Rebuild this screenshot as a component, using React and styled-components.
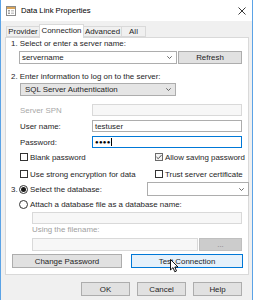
import React from "react";
import styled, { createGlobalStyle } from "styled-components";

const Global = createGlobalStyle`
  html, body { margin: 0; padding: 0; background: #f0f0f0; }
  body { font-family: "Liberation Sans", Arial, sans-serif; font-size: 7.9px; color: #1e1e1e; }
  * { box-sizing: border-box; }
`;

const Window = styled.div`
  width: 253px;
  height: 300px;
  border-left: 1px solid #5ba3e6;
  border-right: 1px solid #5ba3e6;
  background: #f0f0f0;
  overflow: hidden;
  display: flex;
  flex-direction: column;
`;

const TitleBar = styled.div`
  height: 21px;
  background: #fff;
  display: flex;
  align-items: center;
  padding-left: 5px;
  padding-right: 6px;
  flex-shrink: 0;
`;

const TitleText = styled.span`
  font-size: 7.7px;
  margin-left: 5px;
  flex: 1;
  color: #000;
`;

const TabStrip = styled.div`
  display: flex;
  align-items: flex-end;
  height: 13px;
  margin-top: 3px;
  margin-left: 5px;
  position: relative;
  z-index: 1;
`;

const Tab = styled.div`
  width: ${(p) => p.$w}px;
  height: ${(p) => (p.$active ? 14 : 11)}px;
  margin-bottom: ${(p) => (p.$active ? -1 : 0)}px;
  margin-left: ${(p) => (p.$first ? 0 : -1)}px;
  border: 1px solid #d9d9d9;
  border-bottom: ${(p) => (p.$active ? "none" : "1px solid #d9d9d9")};
  background: ${(p) => (p.$active ? "#fff" : "#f0f0f0")};
  display: flex;
  align-items: center;
  justify-content: center;
  padding-bottom: ${(p) => (p.$active ? 2 : 0)}px;
  position: relative;
  z-index: ${(p) => (p.$active ? 2 : 1)};
`;

const Panel = styled.div`
  margin-left: 4px;
  width: 244px;
  border: 1px solid #d9d9d9;
  background: #fff;
  display: flex;
  flex-direction: column;
  padding-bottom: 6px;
`;

const Label = styled.div`
  height: 10px;
  line-height: 10px;
  margin-top: ${(p) => p.$mt || 0}px;
  margin-left: ${(p) => p.$ml || 0}px;
  color: ${(p) => (p.$disabled ? "#a0a0a0" : "#1e1e1e")};
  white-space: nowrap;
`;

const Row = styled.div`
  display: flex;
  align-items: center;
  height: ${(p) => p.$h}px;
  margin-top: ${(p) => p.$mt || 0}px;
  margin-left: ${(p) => p.$ml || 0}px;
`;

const Combo = styled.div`
  width: ${(p) => p.$w}px;
  height: ${(p) => p.$h || 13}px;
  margin-left: ${(p) => p.$ml || 0}px;
  border: 1px solid #adadad;
  background: ${(p) => (p.$gray ? "#e5e5e5" : "#fff")};
  display: flex;
  align-items: center;
  padding-left: ${(p) => (p.$gray ? 4 : 2)}px;
  padding-right: 4px;
  flex-shrink: 0;
`;

const ComboText = styled.span`
  flex: 1;
  white-space: nowrap;
`;

const Input = styled.div`
  width: ${(p) => p.$w}px;
  height: ${(p) => p.$h || 12}px;
  margin-left: ${(p) => p.$ml || 0}px;
  border: 1px solid ${(p) => (p.$focus ? "#0078d7" : p.$disabled ? "#d9d9d9" : "#adadad")};
  background: ${(p) => (p.$disabled ? "#f7f7f7" : "#fff")};
  display: flex;
  align-items: center;
  padding-left: 2px;
  flex-shrink: 0;
  white-space: nowrap;
`;

const Dots = styled.span`
  font-size: 6px;
  letter-spacing: 0.3px;
  color: #000;
`;

const FieldLabel = styled.div`
  width: 72px;
  flex-shrink: 0;
  color: ${(p) => (p.$disabled ? "#a8a8a8" : "#1e1e1e")};
`;

const Caret = styled.span`
  display: inline-block;
  width: 1px;
  height: 8px;
  background: #000;
  margin-left: 0.5px;
`;

const Button = styled.div`
  width: ${(p) => p.$w}px;
  height: ${(p) => p.$h || 14}px;
  margin-left: ${(p) => p.$ml || 0}px;
  border: 1px solid ${(p) => (p.$hover ? "#0078d7" : p.$disabled ? "#bfbfbf" : "#adadad")};
  background: ${(p) => (p.$hover ? "#e5f1fb" : p.$disabled ? "#cccccc" : "#e1e1e1")};
  color: ${(p) => (p.$disabled ? "#838383" : "#1e1e1e")};
  display: flex;
  align-items: center;
  justify-content: center;
  flex-shrink: 0;
  position: relative;
  white-space: nowrap;
`;

const Check = styled.div`
  width: 8px;
  height: 8px;
  border: 1px solid ${(p) => (p.$dim ? "#6b6b6b" : "#333")};
  background: ${(p) => (p.$dim ? "#f4f4f4" : "#fff")};
  flex-shrink: 0;
  display: flex;
  align-items: center;
  justify-content: center;
`;

const Radio = styled.div`
  width: 9px;
  height: 9px;
  border-radius: 50%;
  border: 1px solid #333;
  background: #fff;
  flex-shrink: 0;
  display: flex;
  align-items: center;
  justify-content: center;
  &::after {
    content: "";
    display: ${(p) => (p.$on ? "block" : "none")};
    width: 5px;
    height: 5px;
    border-radius: 50%;
    background: #1a1a1a;
  }
`;

const OptText = styled.span`
  margin-left: ${(p) => p.$ml ?? 2}px;
  white-space: nowrap;
`;

const CheckCell = styled.div`
  display: flex;
  align-items: center;
  width: ${(p) => p.$w}px;
`;

const Number = styled.span`
  width: 8px;
  flex-shrink: 0;
`;

const Footer = styled.div`
  display: flex;
  justify-content: flex-end;
  gap: 7px;
  margin-top: 7px;
  padding-right: 10px;
`;

const CursorIcon = styled.svg`
  position: absolute;
  left: 38px;
  top: 4px;
  z-index: 3;
`;

const Chevron = () => (
  <svg width="5" height="3" viewBox="0 0 5 3">
    <polyline points="0.3,0.3 2.5,2.5 4.7,0.3" fill="none" stroke="#444" strokeWidth="0.8" />
  </svg>
);

const AppIcon = () => (
  <svg width="10" height="10" viewBox="0 0 10 10">
    <rect x="0.5" y="0.5" width="9" height="9" fill="#fff" stroke="#8a8a8a" />
    <rect x="1" y="1" width="8" height="2" fill="#d9a55a" />
    <rect x="2" y="4" width="2" height="1.5" fill="#9a9a9a" />
    <rect x="2" y="6.5" width="2" height="1.5" fill="#9a9a9a" />
    <rect x="5" y="4" width="3" height="1.5" fill="#c7c7c7" />
    <rect x="5" y="6.5" width="3" height="1.5" fill="#c7c7c7" />
  </svg>
);

const CloseIcon = () => (
  <svg width="8" height="8" viewBox="0 0 8 8">
    <path d="M0.5 0.5 L7.5 7.5 M7.5 0.5 L0.5 7.5" stroke="#222" strokeWidth="0.9" />
  </svg>
);

const Tick = () => (
  <svg width="7" height="6" viewBox="0 0 7 6">
    <polyline points="0.6,3 2.6,5 6.4,0.8" fill="none" stroke="#333" strokeWidth="1" />
  </svg>
);

export default function App() {
  return (
    <>
      <Global />
      <Window>
        <TitleBar>
          <AppIcon />
          <TitleText>Data Link Properties</TitleText>
          <CloseIcon />
        </TitleBar>

        <TabStrip>
          <Tab $w={34} $first>Provider</Tab>
          <Tab $w={45} $active>Connection</Tab>
          <Tab $w={39}>Advanced</Tab>
          <Tab $w={25}>All</Tab>
        </TabStrip>

        <Panel>
          <Label $mt={1} $ml={5}>1. Select or enter a server name:</Label>
          <Row $h={13} $mt={2} $ml={13}>
            <Combo $w={158}>
              <ComboText>servername</ComboText>
              <Chevron />
            </Combo>
            <Button $w={64} $h={13} $ml={1}>Refresh</Button>
          </Row>

          <Label $mt={8} $ml={5}>2. Enter information to log on to the server:</Label>
          <Row $h={13} $mt={1} $ml={14}>
            <Combo $w={156} $gray>
              <ComboText>SQL Server Authentication</ComboText>
              <Chevron />
            </Combo>
          </Row>

          <Row $h={12} $mt={8} $ml={14}>
            <FieldLabel $disabled>Server SPN</FieldLabel>
            <Input $w={150} $disabled />
          </Row>
          <Row $h={12} $mt={4} $ml={14}>
            <FieldLabel>User name:</FieldLabel>
            <Input $w={150}>testuser</Input>
          </Row>
          <Row $h={12} $mt={4} $ml={14}>
            <FieldLabel>Password:</FieldLabel>
            <Input $w={150} $focus>
              <Dots>●●●●</Dots>
              <Caret />
            </Input>
          </Row>

          <Row $h={10} $mt={4} $ml={14}>
            <CheckCell $w={135}>
              <Check />
              <OptText>Blank password</OptText>
            </CheckCell>
            <CheckCell $w={90}>
              <Check $dim>
                <Tick />
              </Check>
              <OptText>Allow saving password</OptText>
            </CheckCell>
          </Row>
          <Row $h={10} $mt={7} $ml={14}>
            <CheckCell $w={135}>
              <Check />
              <OptText>Use strong encryption for data</OptText>
            </CheckCell>
            <CheckCell $w={90}>
              <Check />
              <OptText>Trust server certificate</OptText>
            </CheckCell>
          </Row>

          <Row $h={14} $mt={3} $ml={5}>
            <Number>3.</Number>
            <Radio $on />
            <OptText $ml={2}>Select the database:</OptText>
            <Combo $w={102} $h={14} $ml={45}>
              <ComboText />
              <Chevron />
            </Combo>
          </Row>
          <Row $h={10} $mt={3} $ml={13}>
            <Radio />
            <OptText $ml={2}>Attach a database file as a database name:</OptText>
          </Row>
          <Row $h={12} $mt={3} $ml={26}>
            <Input $w={210} $disabled />
          </Row>
          <Label $mt={1} $ml={26} $disabled>Using the filename:</Label>
          <Row $h={13} $mt={3} $ml={26}>
            <Input $w={166} $h={13} $disabled />
            <Button $w={43} $h={13} $ml={1} $disabled>...</Button>
          </Row>

          <Row $h={14} $mt={3} $ml={6}>
            <Button $w={110}>Change Password</Button>
            <Button $w={112} $ml={9} $hover>
              Test Connection
              <CursorIcon width="9" height="14" viewBox="0 0 9 14">
                <path d="M0.5 0.5 L0.5 11 L3 8.6 L4.8 12.8 L6.5 12 L4.8 8 L8 8 Z" fill="#fff" stroke="#000" strokeWidth="0.9" strokeLinejoin="round" />
              </CursorIcon>
            </Button>
          </Row>
        </Panel>

        <Footer>
          <Button $w={49}>OK</Button>
          <Button $w={49}>Cancel</Button>
          <Button $w={49}>Help</Button>
        </Footer>
      </Window>
    </>
  );
}
